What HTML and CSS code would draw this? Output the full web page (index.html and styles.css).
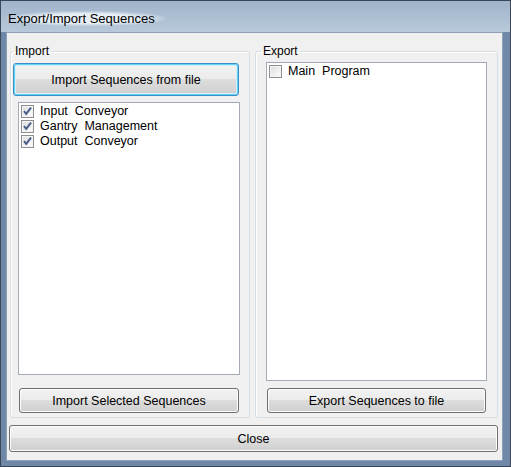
FILE: index.html
```html
<!DOCTYPE html>
<html>
<head>
<meta charset="utf-8">
<link rel="stylesheet" href="styles.css">
</head>
<body>
<div class="window">
  <div class="titlebar"><span class="title">Export/Import Sequences</span></div>
  <div class="client">
    <div class="groups">
      <fieldset class="group group-import">
        <legend>Import</legend>
        <button class="btn btn-default btn-file">Import Sequences from file</button>
        <div class="listbox list-import">
          <div class="item"><span class="cb checked"><svg width="13" height="13" viewBox="0 0 13 13"><path d="M3 6.2 L5.2 8.8 L10 2.6" fill="none" stroke="#4a5d8c" stroke-width="2"/></svg></span><span class="label">Input&nbsp; Conveyor</span></div>
          <div class="item"><span class="cb checked"><svg width="13" height="13" viewBox="0 0 13 13"><path d="M3 6.2 L5.2 8.8 L10 2.6" fill="none" stroke="#4a5d8c" stroke-width="2"/></svg></span><span class="label">Gantry&nbsp; Management</span></div>
          <div class="item"><span class="cb checked"><svg width="13" height="13" viewBox="0 0 13 13"><path d="M3 6.2 L5.2 8.8 L10 2.6" fill="none" stroke="#4a5d8c" stroke-width="2"/></svg></span><span class="label">Output&nbsp; Conveyor</span></div>
        </div>
        <button class="btn btn-bottom btn-import-sel">Import Selected Sequences</button>
      </fieldset>
      <fieldset class="group group-export">
        <legend>Export</legend>
        <div class="listbox list-export">
          <div class="item"><span class="cb"></span><span class="label">Main&nbsp; Program</span></div>
        </div>
        <button class="btn btn-bottom btn-export">Export Sequences to file</button>
      </fieldset>
    </div>
    <button class="btn btn-close">Close</button>
  </div>
</div>
</body>
</html>
```

FILE: styles.css
```css
html, body {
  margin: 0;
  padding: 0;
  background: #ffffff;
}

.window {
  width: 511px;
  height: 467px;
  box-sizing: border-box;
  border: 1px solid #3b4756;
  background: linear-gradient(to bottom, #a7b9cd 0px, #b5c5d7 30px, #6f88a8 31px, #6f88a8 100%);
  display: flex;
  flex-direction: column;
  padding: 0 7px 5px 5px;
  font-family: "Liberation Sans", Arial, sans-serif;
  color: #000;
}

.titlebar {
  height: 31px;
  flex: none;
  position: relative;
  background: linear-gradient(to bottom, #9fb3ca 0%, #b9c9db 100%);
  margin: 0 -7px 0 -5px;
  padding-left: 6px;
  display: flex;
  align-items: flex-start;
}

.title {
  font-size: 13px;
  line-height: 15px;
  margin-top: 10px;
  padding: 0 10px 0 1px;
  background: radial-gradient(ellipse at center, rgba(235,241,247,0.95) 45%, rgba(235,241,247,0) 75%);
}

.client {
  flex: 1;
  background: #f0f0f0;
  border: 1px solid #8da1ba;
  border-top-color: #8da1ba;
  display: flex;
  flex-direction: column;
  padding-left: 3px;
}

.groups {
  display: flex;
  gap: 5px;
  margin-top: 11px;
}

.group {
  margin: 0;
  padding: 0;
  min-width: 0;
  border: 1px solid #d5dfe5;
  border-radius: 3px;
  box-shadow: inset 1px 1px 0 #ffffff;
  height: 374px;
  box-sizing: border-box;
  display: flex;
  flex-direction: column;
}

.group legend {
  font-size: 12px;
  line-height: 14px;
  padding: 0 2px;
  margin-left: 2px;
  color: #000;
}

.group-import { width: 240px; }
.group-export { width: 243px; }
.group-export legend { margin-left: 5px; }

.btn {
  font-family: "Liberation Sans", Arial, sans-serif;
  font-size: 12.5px;
  color: #000;
  border: 1px solid #707070;
  border-radius: 3px;
  background: linear-gradient(to bottom, #f2f2f2 0%, #ebebeb 49%, #dddddd 50%, #cfcfcf 100%);
  box-shadow: inset 0 0 0 1px #fbfbfb;
  padding: 0;
  margin: 0;
  box-sizing: border-box;
  flex: none;
}

.btn-default {
  border-color: #3c8fc4;
  box-shadow: inset 0 0 0 1px #5fd2f7, inset 0 0 0 2px #d6eef8;
}

.btn-file {
  width: 226px;
  height: 33px;
  margin-top: 5px;
  margin-left: 2px;
}

.listbox {
  background: #ffffff;
  border: 1px solid #a5acb5;
  border-top-color: #a0a8b3;
  box-sizing: border-box;
  padding: 1px 0 0 2px;
  flex: none;
}

.list-import {
  width: 222px;
  height: 273px;
  margin-top: 6px;
  margin-left: 7px;
}

.list-export {
  width: 221px;
  height: 319px;
  margin-top: 4px;
  margin-left: 10px;
}

.item {
  height: 15px;
  display: flex;
  align-items: flex-start;
  font-size: 12.5px;
  line-height: 15px;
}

.cb {
  width: 13px;
  height: 13px;
  margin-top: 1px;
  box-sizing: border-box;
  border: 1px solid #8f8f8f;
  background: linear-gradient(135deg, #dcdcdc 0%, #f4f4f4 70%, #ffffff 100%);
  box-shadow: inset 0 0 0 1px #f4f4f4;
  position: relative;
  flex: none;
}

.cb svg {
  position: absolute;
  left: -1px;
  top: -1px;
}

.label {
  margin-left: 6px;
  white-space: pre;
}

.btn-bottom {
  height: 25px;
}

.btn-import-sel {
  width: 220px;
  margin-top: 13px;
  margin-left: 8px;
}

.btn-export {
  width: 219px;
  margin-top: 7px;
  margin-left: 11px;
}

.btn-close {
  width: 489px;
  height: 27px;
  margin-top: 7px;
  margin-left: -1px;
}
```
